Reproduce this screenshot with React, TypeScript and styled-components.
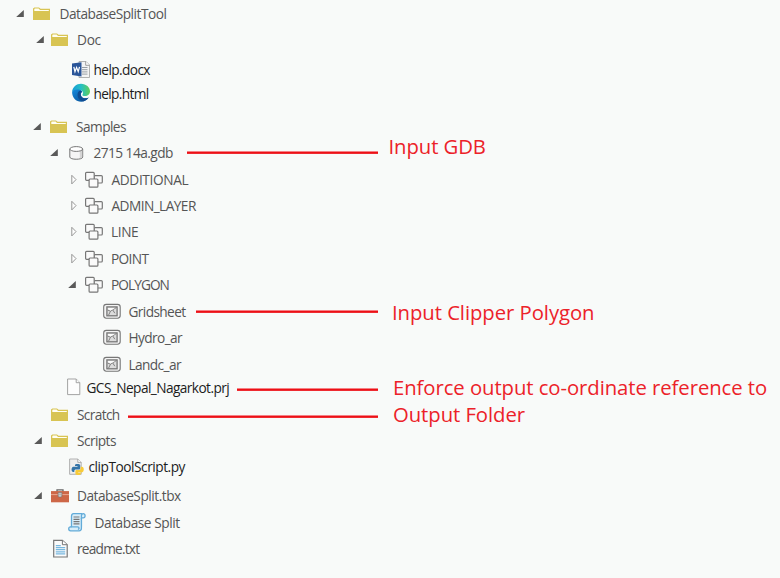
import React from 'react';
import styled, { createGlobalStyle } from 'styled-components';

const GlobalStyle = createGlobalStyle`
  body { margin: 0; background: #f8faf9; }
`;

const Page = styled.main`
  width: 780px;
  height: 578px;
  overflow: hidden;
  box-sizing: border-box;
  padding-top: 3px;
  background: #f8faf9;
  font-family: 'Open Sans', 'Noto Sans', sans-serif;
`;

const Row = styled.div<{ $gap: number; $indent: number }>`
  display: flex;
  align-items: center;
  height: 22px;
  margin-top: ${(p) => p.$gap}px;
  padding-left: ${(p) => p.$indent}px;
`;

const Slot = styled.span<{ $width: number }>`
  display: flex;
  align-items: center;
  flex: none;
  width: ${(p) => p.$width}px;
  height: 22px;
  svg { display: block; flex: none; overflow: visible; }
`;

const Label = styled.span<{ $width?: number; $tracking: number; $dark?: boolean }>`
  flex: none;
  width: ${(p) => (p.$width ? `${p.$width}px` : 'auto')};
  font-size: 13.7px;
  line-height: 22px;
  white-space: nowrap;
  letter-spacing: ${(p) => p.$tracking}px;
  color: ${(p) => (p.$dark ? '#1c1c1c' : '#555555')};
`;

const Leader = styled.span<{ $width: number; $drop: number }>`
  flex: none;
  width: ${(p) => p.$width}px;
  height: 3px;
  margin-top: ${(p) => p.$drop}px;
  background: linear-gradient(#f58085 0 1px, #ec1016 1px 2px, #ee2b31 2px 3px);
`;

const Note = styled.span<{ $left: number; $drop: number; $tracking: number }>`
  flex: none;
  margin-left: ${(p) => p.$left}px;
  margin-top: ${(p) => p.$drop}px;
  font-size: 20.3px;
  line-height: 24px;
  white-space: nowrap;
  letter-spacing: ${(p) => p.$tracking}px;
  color: #ec2229;
`;

const Expanded = () => (
  <svg width="8" height="8" viewBox="0 0 8 8"><path d="M7.8 0V7H.2Z" fill="#595959" /></svg>
);
const Collapsed = () => (
  <svg width="8" height="10" viewBox="0 0 8 10"><path d="M.8 .3v8.6L5 4.6Z" fill="#fff" stroke="#8b8b8b" strokeWidth=".9" /></svg>
);
const Folder = () => (
  <svg width="18" height="14" viewBox="0 0 18 14">
    <path d="M0 13V1.6L1.4.4H6L7.6 1.8H17V13Z" fill="#d8c453" />
    <path d="M1.3 4V2.1L2 1.5H5.6L7 3H15.8V4Z" fill="#fffef2" />
  </svg>
);
const Word = () => (
  <svg width="18" height="18" viewBox="0 0 18 18">
    <path d="M7 .5h7l3.5 3.5v12.5H7Z" fill="#f4f4f4" stroke="#a0a0a0" strokeWidth=".8" />
    <path d="M13.7 .5v3.8h3.8" fill="#fff" stroke="#888" strokeWidth=".8" />
    <path d="M10 6.5h5.5M10 8.7h5.5M10 10.9h5.5M10 13.1h5.5" stroke="#8d949b" strokeWidth=".9" />
    <path d="M0 2.6 9.5 1.2v14.2L0 14Z" fill="#2a5599" />
    <path d="m1.8 5.8 1.2 4.8 1.6-4.2 1.6 4.2 1.3-4.8" fill="none" stroke="#fff" strokeWidth="1.25" />
  </svg>
);
const Edge = () => (
  <svg width="18" height="18" viewBox="0 0 18 18">
    <defs>
      <linearGradient id="edgeTop" x1="0" x2="1"><stop stopColor="#169bd7" /><stop offset=".5" stopColor="#25bfc4" /><stop offset="1" stopColor="#61cf58" /></linearGradient>
      <linearGradient id="edgeBase" x1="0" x2=".7" y2="1"><stop stopColor="#168ce0" /><stop offset="1" stopColor="#0b579f" /></linearGradient>
    </defs>
    <g transform="translate(0 -1.3)">
      <path d="M.1 8C0 14 4 18 9.2 18c3.1 0 5.8-1.5 7.5-4.2-3.2 1.6-6.3.8-7.4-1.3-1-1.7-.6-3.4.8-4.5C9 4.2 2.3 3.4.1 8Z" fill="url(#edgeBase)" />
      <path d="M6.2 8.2c-1.9 3.7.2 8.4 4.9 9.4 2.2-.4 4.4-1.9 5.6-3.8-3.2 1.6-6.3.8-7.4-1.3-1-1.7-.6-3.4.8-4.5-.8-1.4-2.7-1.4-3.9.2Z" fill="#104c92" />
      <path d="M.1 8C.6 3.3 4.3 0 9 0c5.2 0 9 3.7 9 7.6 0 3-2.2 4.8-4.9 4.8-1.8 0-3-.6-2.7-1.4 1.5-1.7.2-4.8-4-5.1C3.7 5.7 1.2 6.5.1 8Z" fill="url(#edgeTop)" />
    </g>
  </svg>
);
const Database = () => (
  <svg width="15" height="14" viewBox="0 0 15 14">
    <path d="M.8 3v8c0 3 12.9 3 12.9 0V3" fill="#f5f5f5" stroke="#777" />
    <path d="M10.8 5.3v7c1.4-.3 2.4-.8 2.4-1.5V4Z" fill="#d5d5d5" />
    <ellipse cx="7.25" cy="3" rx="6.45" ry="2.4" fill="#fff" stroke="#777" />
  </svg>
);
const Dataset = () => (
  <svg width="18" height="17" viewBox="0 0 18 17" fill="#fafafa" stroke="#777" strokeWidth="1.2">
    <rect x="9" y="3.6" width="8.3" height="7.4" rx="1" />
    <rect x=".6" y=".3" width="8.6" height="8" rx="1" />
    <rect x="4.1" y="7" width="8.8" height="8.2" rx="1" />
  </svg>
);
const Polygon = () => (
  <svg width="18" height="16" viewBox="0 0 18 16" fill="none" stroke="#777">
    <rect x=".7" y=".4" width="16.5" height="13.8" rx="2.6" fill="#f4f4f4" strokeWidth="1.1" />
    <rect x="3.9" y="2.9" width="10.2" height="8.9" fill="#dcdcdc" strokeWidth="1.3" />
    <path d="m4.5 6 3 1.2L13.4 3.5M7.5 7.2l-2 4M9.8 6l2 3.2" strokeWidth=".9" />
    <path d="M5 3.9H12L9.5 5.4 7.5 6.4 5 5.3Z" fill="#fafafa" stroke="none" />
  </svg>
);
const BlankFile = () => (
  <svg width="14" height="18" viewBox="0 0 14 18" fill="#fdfdfd" stroke="#999" strokeWidth=".9">
    <path d="M.6 0h8.6l3.6 3.7v11.9H.6Z" /><path d="M9.2 0v3.7h3.6" />
  </svg>
);
const Python = () => (
  <svg width="15" height="17" viewBox="0 0 15 17">
    <path d="M.6 0h8.2l3.4 3.4v11.9H.6Z" fill="#eee" stroke="#aaa" strokeWidth=".9" />
    <path d="M8.8 0v3.4h3.4" fill="#fff" stroke="#999" strokeWidth=".8" />
    <path d="M6 6c0-1.4 5.2-1.4 5.2.3v2.9c0 .8-.5 1.3-1.4 1.3H6.9c-1 0-1.6.6-1.6 1.6v1H4.3c-2.3-.2-2.3-5.1 0-5.4h4.2V7.1H6Z" fill="#3474a8" />
    <path d="M11.7 7.8h1.1c2.7 0 2.6 5.4 0 5.6H9.2v.5h2.6v1.1c0 1.5-5.4 1.5-5.4-.3v-2.5c0-.8.5-1.3 1.4-1.3h2.4c1 0 1.5-.6 1.5-1.6Z" fill="#f8cb38" />
  </svg>
);
const Toolbox = () => (
  <svg width="18" height="15" viewBox="0 0 18 15">
    <path d="M6 3V.9h6V3" fill="none" stroke="#666" strokeWidth="1.3" />
    <rect y="2.1" width="18" height="11.2" fill="#cd6748" />
    <path d="M0 5.6h6.8M11.2 5.6H18" stroke="#f0b8a4" strokeWidth=".8" />
    <rect x="7.2" y="3.4" width="3.6" height="4.5" rx=".8" fill="#eee" stroke="#767676" strokeWidth=".8" />
    <path d="M9 4.3v2.3" stroke="#777" />
  </svg>
);
const Script = () => (
  <svg width="18" height="20" viewBox="0 0 18 20" fill="#d9eefa" stroke="#62abd8" strokeWidth="1.3" strokeLinejoin="round">
    <path d="M13.9.6H5.6C4.1.6 3.5 1.8 3.5 3.3v10.5h9.9V3C13.4 1.2 14.3.6 15.2.6c2.6 0 2.4 4.3 0 4.3h-1.8" />
    <path d="M3.5 13.8h-.9c-2.5 0-2.5 4 0 4h8.5c1.5 0 2.3-1.2 2.3-2.5V4.9" />
    <path d="M2.6 13.8h7c1.9 0 1.8 2.5.3 2.5" fill="none" />
    <path d="M5.5 4h6M5.5 6.3h6M5.5 8.6h6M5.5 10.9h6" stroke="#777" strokeWidth="1.2" />
  </svg>
);
const TextFile = () => (
  <svg width="15" height="18" viewBox="0 0 15 18">
    <path d="M.7.4h8.7L14.2 4.7V17H.7Z" fill="#fbfbfb" stroke="#777" strokeWidth="1.2" />
    <path d="M9.4.4v4.3h4.8" fill="#fff" stroke="#777" />
    <path d="M2.8 5.5h5M2.8 7.6h9.4M2.8 9.7h9.4M2.8 11.8h9.4M2.8 13.9h9.4" stroke="#78b8df" strokeWidth="1.25" />
  </svg>
);

type Entry = {
  name: string;
  icon: React.FC;
  gap: number;
  toggle?: React.FC;
  indent: number;
  iconAt: number;
  labelAt: number;
  tracking: number;
  dark?: boolean;
  note?: { text: string; from: number; to: number; lineDrop: number; at: number; drop: number; tracking: number };
};

const entries: Entry[] = [
  { name: 'DatabaseSplitTool', icon: Folder, gap: 0, toggle: Expanded, indent: 16, iconAt: 33, labelAt: 59.5, tracking: -0.5 },
  { name: 'Doc', icon: Folder, gap: 4, toggle: Expanded, indent: 36, iconAt: 50.5, labelAt: 77, tracking: -0.3 },
  { name: 'help.docx', icon: Word, gap: 8, indent: 72, iconAt: 72, labelAt: 93.5, tracking: -0.6, dark: true },
  { name: 'help.html', icon: Edge, gap: 2, indent: 72, iconAt: 72, labelAt: 93.5, tracking: -0.65, dark: true },
  { name: 'Samples', icon: Folder, gap: 11, toggle: Expanded, indent: 33, iconAt: 50, labelAt: 76, tracking: -0.55 },
  { name: '2715 14a.gdb', icon: Database, gap: 4, toggle: Expanded, indent: 50, iconAt: 69, labelAt: 93.5, tracking: -0.55,
    note: { text: 'Input GDB', from: 187, to: 378, lineDrop: -1, at: 388.5, drop: -15, tracking: -0.07 } },
  { name: 'ADDITIONAL', icon: Dataset, gap: 5, toggle: Collapsed, indent: 71, iconAt: 85, labelAt: 111.5, tracking: -0.37 },
  { name: 'ADMIN_LAYER', icon: Dataset, gap: 4, toggle: Collapsed, indent: 71, iconAt: 85, labelAt: 111.5, tracking: -0.57 },
  { name: 'LINE', icon: Dataset, gap: 4, toggle: Collapsed, indent: 71, iconAt: 85, labelAt: 111, tracking: -0.4 },
  { name: 'POINT', icon: Dataset, gap: 5, toggle: Collapsed, indent: 71, iconAt: 85, labelAt: 111, tracking: -0.65 },
  { name: 'POLYGON', icon: Dataset, gap: 4, toggle: Expanded, indent: 68, iconAt: 85, labelAt: 111, tracking: -0.95 },
  { name: 'Gridsheet', icon: Polygon, gap: 5, indent: 103, iconAt: 103, labelAt: 128.5, tracking: -0.62,
    note: { text: 'Input Clipper Polygon', from: 196, to: 378, lineDrop: -1, at: 392, drop: 0, tracking: -0.05 } },
  { name: 'Hydro_ar', icon: Polygon, gap: 4, indent: 103, iconAt: 103, labelAt: 128.5, tracking: -0.6 },
  { name: 'Landc_ar', icon: Polygon, gap: 5, indent: 103, iconAt: 103, labelAt: 128.5, tracking: -0.6 },
  { name: 'GCS_Nepal_Nagarkot.prj', icon: BlankFile, gap: 1, indent: 67, iconAt: 67, labelAt: 86.5, tracking: -0.58, dark: true,
    note: { text: 'Enforce output co-ordinate reference to', from: 237, to: 378, lineDrop: 3, at: 393, drop: -2, tracking: -0.06 } },
  { name: 'Scratch', icon: Folder, gap: 5, indent: 50.5, iconAt: 50.5, labelAt: 77, tracking: -0.65,
    note: { text: 'Output Folder', from: 128, to: 378, lineDrop: 3, at: 393, drop: -2, tracking: -0.05 } },
  { name: 'Scripts', icon: Folder, gap: 4, toggle: Expanded, indent: 34, iconAt: 50.5, labelAt: 77, tracking: -0.58 },
  { name: 'clipToolScript.py', icon: Python, gap: 4, indent: 69, iconAt: 69, labelAt: 88.5, tracking: -0.47, dark: true },
  { name: 'DatabaseSplit.tbx', icon: Toolbox, gap: 7, toggle: Expanded, indent: 34, iconAt: 51, labelAt: 77, tracking: -0.48 },
  { name: 'Database Split', icon: Script, gap: 5, indent: 68, iconAt: 68, labelAt: 94.5, tracking: -0.45 },
  { name: 'readme.txt', icon: TextFile, gap: 4, indent: 53, iconAt: 53, labelAt: 77, tracking: -0.78 },
];

const TreeRow = ({ entry }: { entry: Entry }) => {
  const { icon: Icon, toggle: Toggle, note } = entry;
  return (
    <Row $gap={entry.gap} $indent={entry.indent}>
      {Toggle && <Slot $width={entry.iconAt - entry.indent}><Toggle /></Slot>}
      <Slot $width={entry.labelAt - entry.iconAt}><Icon /></Slot>
      <Label $width={note && note.from - entry.labelAt} $tracking={entry.tracking} $dark={entry.dark}>{entry.name}</Label>
      {note && (
        <>
          <Leader $width={note.to - note.from} $drop={note.lineDrop} />
          <Note $left={note.at - note.to} $drop={note.drop} $tracking={note.tracking}>{note.text}</Note>
        </>
      )}
    </Row>
  );
};

export default function App() {
  return (
    <>
      <GlobalStyle />
      <Page>
        {entries.map((entry) => <TreeRow key={entry.name} entry={entry} />)}
      </Page>
    </>
  );
}
